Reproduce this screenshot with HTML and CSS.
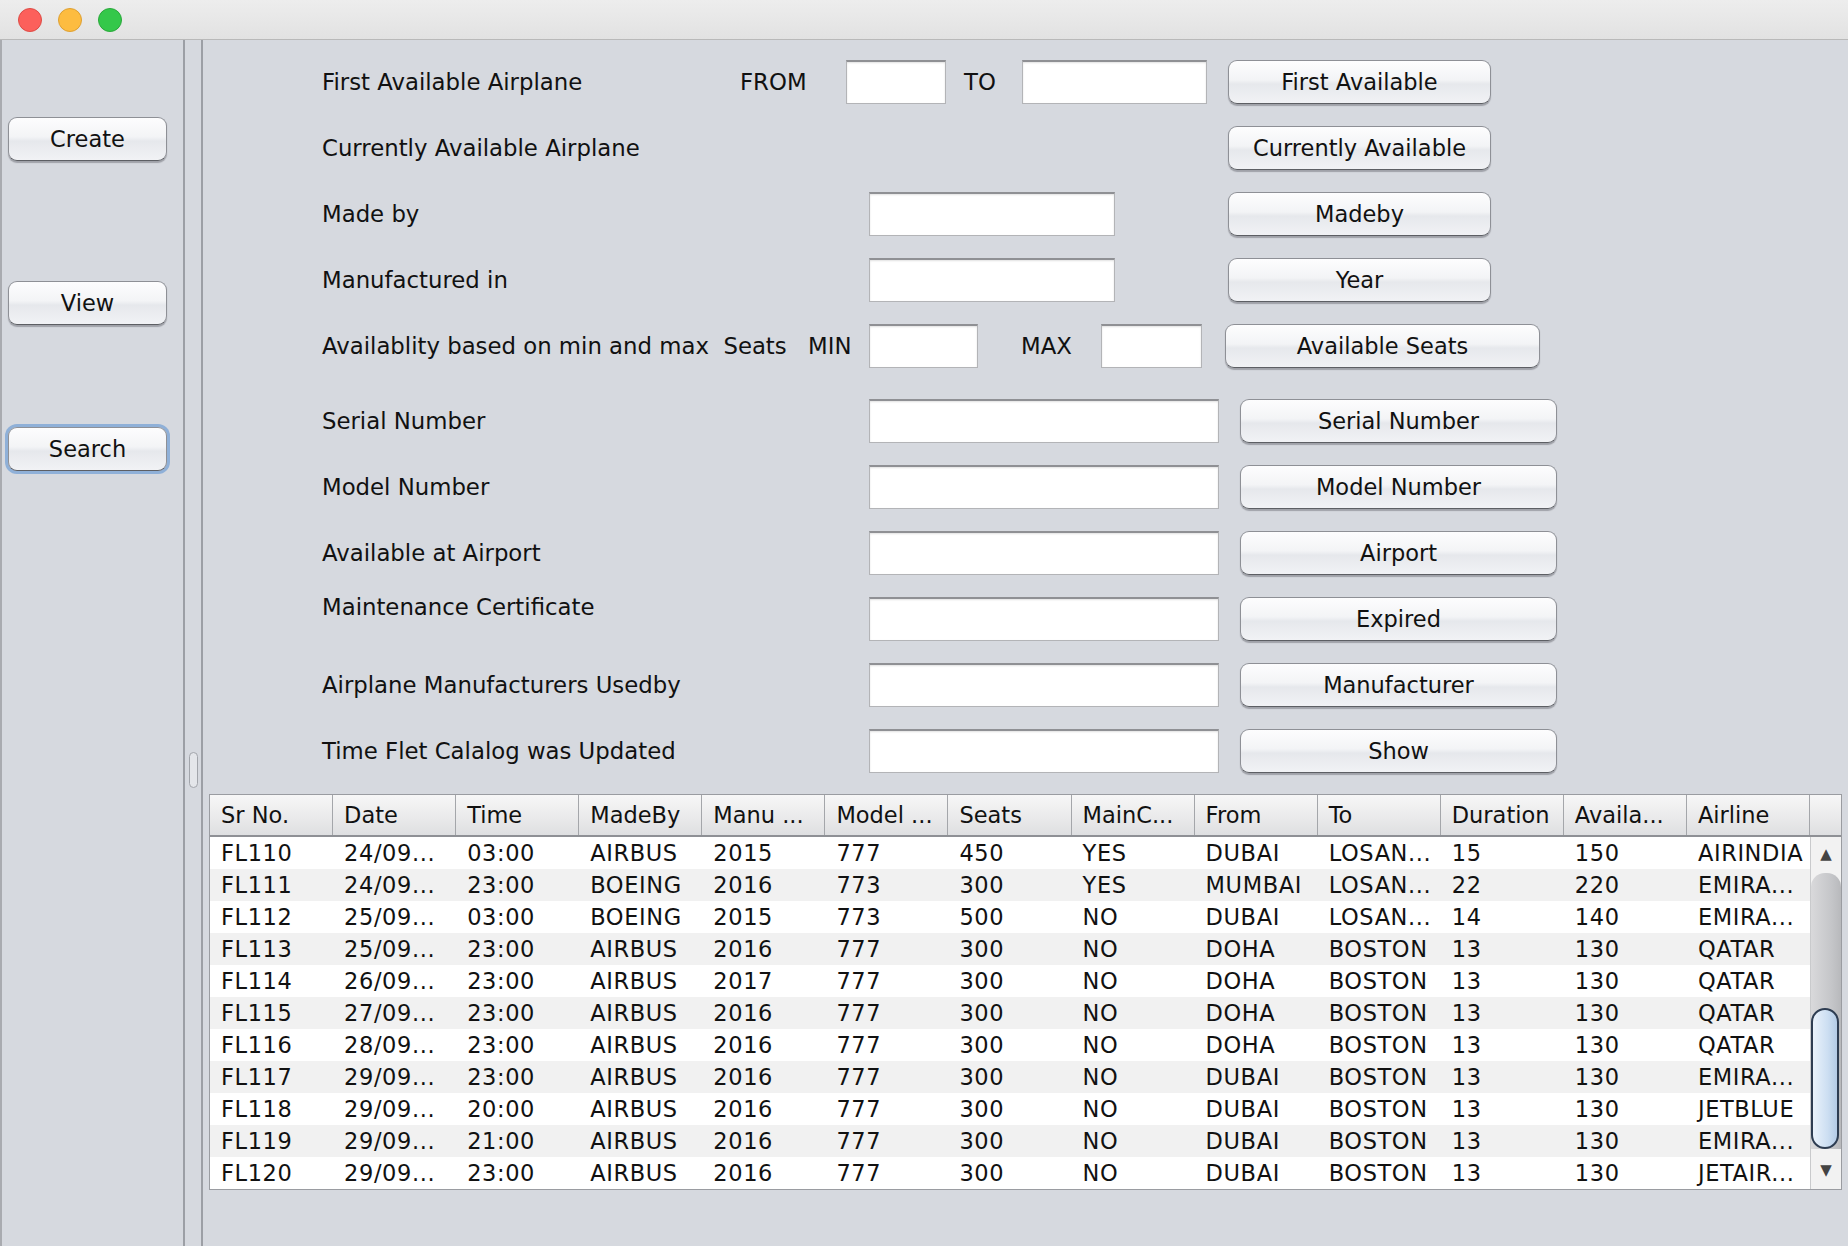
FILE: index.html
```html
<!DOCTYPE html>
<html>
<head>
<meta charset="utf-8">
<title>Airplane Search</title>
<link rel="stylesheet" href="styles.css">
</head>
<body>
<div class="titlebar">
  <span class="light red"></span>
  <span class="light yellow"></span>
  <span class="light green"></span>
</div>
<div class="window">
  <aside class="sidebar">
    <button class="btn side-btn create">Create</button>
    <button class="btn side-btn view">View</button>
    <button class="btn side-btn search focused">Search</button>
  </aside>
  <div class="divider"><span class="handle"></span></div>
  <main class="main">
    <div class="form">
      <div class="row">
        <span class="lbl w418">First Available Airplane</span>
        <span class="lbl w106">FROM</span>
        <input class="tf w100" type="text">
        <span class="lbl w76 pl18">TO</span>
        <input class="tf w185" type="text">
        <button class="btn w263 ml21">First Available</button>
      </div>
      <div class="row">
        <span class="lbl w906">Currently Available Airplane</span>
        <button class="btn w263">Currently Available</button>
      </div>
      <div class="row">
        <span class="lbl w547">Made by</span>
        <input class="tf w246" type="text">
        <button class="btn w263 ml113">Madeby</button>
      </div>
      <div class="row">
        <span class="lbl w547">Manufactured in</span>
        <input class="tf w246" type="text">
        <button class="btn w263 ml113">Year</button>
      </div>
      <div class="row">
        <span class="lbl w486 pre">Availablity based on min and max  Seats</span>
        <span class="lbl w61">MIN</span>
        <input class="tf w109" type="text">
        <span class="lbl w123 pl43">MAX</span>
        <input class="tf w101" type="text">
        <button class="btn w315 ml23">Available Seats</button>
      </div>
      <div class="row gap-lg">
        <span class="lbl w547">Serial Number</span>
        <input class="tf w350" type="text">
        <button class="btn w317 ml21">Serial Number</button>
      </div>
      <div class="row">
        <span class="lbl w547">Model Number</span>
        <input class="tf w350" type="text">
        <button class="btn w317 ml21">Model Number</button>
      </div>
      <div class="row">
        <span class="lbl w547">Available at Airport</span>
        <input class="tf w350" type="text">
        <button class="btn w317 ml21">Airport</button>
      </div>
      <div class="row">
        <span class="lbl w547 raised">Maintenance Certificate</span>
        <input class="tf w350" type="text">
        <button class="btn w317 ml21">Expired</button>
      </div>
      <div class="row">
        <span class="lbl w547">Airplane Manufacturers Usedby</span>
        <input class="tf w350" type="text">
        <button class="btn w317 ml21">Manufacturer</button>
      </div>
      <div class="row">
        <span class="lbl w547">Time Flet Calalog was Updated</span>
        <input class="tf w350" type="text">
        <button class="btn w317 ml21">Show</button>
      </div>
    </div>

    <div class="table">
      <div class="thead">
        <div class="th">Sr No.</div>
        <div class="th">Date</div>
        <div class="th">Time</div>
        <div class="th">MadeBy</div>
        <div class="th">Manu ...</div>
        <div class="th">Model ...</div>
        <div class="th">Seats</div>
        <div class="th">MainC...</div>
        <div class="th">From</div>
        <div class="th">To</div>
        <div class="th">Duration</div>
        <div class="th">Availa...</div>
        <div class="th">Airline</div>
        <div class="th corner"></div>
      </div>
      <div class="tbody-wrap">
        <div class="tbody" id="tbody"></div>
        <div class="scrollbar">
          <div class="sb-up">&#9650;</div>
          <div class="sb-track"><div class="sb-thumb"></div></div>
          <div class="sb-down">&#9660;</div>
        </div>
      </div>
    </div>
  </main>
</div>
<script src="script.js"></script>
</body>
</html>
```

FILE: script.js
```js
var rows = [
  ["FL110","24/09...","03:00","AIRBUS","2015","777","450","YES","DUBAI","LOSAN...","15","150","AIRINDIA"],
  ["FL111","24/09...","23:00","BOEING","2016","773","300","YES","MUMBAI","LOSAN...","22","220","EMIRA..."],
  ["FL112","25/09...","03:00","BOEING","2015","773","500","NO","DUBAI","LOSAN...","14","140","EMIRA..."],
  ["FL113","25/09...","23:00","AIRBUS","2016","777","300","NO","DOHA","BOSTON","13","130","QATAR"],
  ["FL114","26/09...","23:00","AIRBUS","2017","777","300","NO","DOHA","BOSTON","13","130","QATAR"],
  ["FL115","27/09...","23:00","AIRBUS","2016","777","300","NO","DOHA","BOSTON","13","130","QATAR"],
  ["FL116","28/09...","23:00","AIRBUS","2016","777","300","NO","DOHA","BOSTON","13","130","QATAR"],
  ["FL117","29/09...","23:00","AIRBUS","2016","777","300","NO","DUBAI","BOSTON","13","130","EMIRA..."],
  ["FL118","29/09...","20:00","AIRBUS","2016","777","300","NO","DUBAI","BOSTON","13","130","JETBLUE"],
  ["FL119","29/09...","21:00","AIRBUS","2016","777","300","NO","DUBAI","BOSTON","13","130","EMIRA..."],
  ["FL120","29/09...","23:00","AIRBUS","2016","777","300","NO","DUBAI","BOSTON","13","130","JETAIR..."]
];
var tb = document.getElementById("tbody");
rows.forEach(function (r, i) {
  var tr = document.createElement("div");
  tr.className = "tr" + (i % 2 ? " alt" : "");
  r.forEach(function (c) {
    var td = document.createElement("div");
    td.className = "td";
    td.textContent = c;
    tr.appendChild(td);
  });
  tb.appendChild(tr);
});
```

FILE: styles.css
```css
* { box-sizing: border-box; }
html, body { margin: 0; padding: 0; }
body {
  width: 1848px;
  height: 1246px;
  overflow: hidden;
  background: #d6d9df;
  font-family: "DejaVu Sans", "Lucida Grande", sans-serif;
  font-size: 22.5px;
  color: #111;
}

/* title bar */
.titlebar {
  height: 40px;
  background: linear-gradient(#ededed, #e2e2e2);
  border-bottom: 1px solid #b9b9b9;
  display: flex;
  align-items: center;
  padding-left: 18px;
  gap: 16px;
}
.light {
  width: 24px;
  height: 24px;
  border-radius: 50%;
  display: block;
}
.red { background: #fc605b; border: 1px solid #de4b45; }
.yellow { background: #fdbc40; border: 1px solid #dea032; }
.green { background: #34c84a; border: 1px solid #29a83a; }

/* window body */
.window {
  display: flex;
  height: 1206px;
  border-left: 2px solid #a9abb0;
}
.sidebar {
  width: 183px;
  border-right: 2px solid #9c9fa5;
  display: flex;
  flex-direction: column;
  align-items: flex-start;
  padding: 77px 0 0 6px;
}
.divider {
  width: 16px;
  position: relative;
}
.handle {
  position: absolute;
  left: 4px;
  top: 712px;
  width: 9px;
  height: 36px;
  border: 1.5px solid #a2a5ab;
  border-radius: 5px;
  background: #e4e6ea;
}
.main {
  flex: 1;
  border-left: 2px solid #9c9fa5;
  padding: 19px 5px 0 6px;
}

/* buttons */
.btn {
  font-family: inherit;
  font-size: 22.5px;
  color: #111;
  height: 44px;
  padding: 0;
  border: 1.5px solid #8e9096;
  border-bottom-color: #5d5f64;
  border-radius: 9px;
  background: linear-gradient(#fdfdfe 0%, #f3f4f6 45%, #e6e8ec 55%, #f1f2f5 100%);
  box-shadow: 0 1.5px 1px rgba(60, 60, 70, 0.35);
  flex: none;
}
.side-btn { width: 159px; }
.view { margin-top: 120px; }
.search { margin-top: 102px; }
.focused {
  box-shadow: 0 0 0 3px #8fb0d8, 0 1.5px 1px rgba(60, 60, 70, 0.35);
}

/* form */
.form { padding-left: 113px; }
.row {
  display: flex;
  align-items: center;
  height: 45px;
}
.row + .row { margin-top: 21px; }
.row.gap-lg { margin-top: 30px; }
.lbl { flex: none; white-space: nowrap; font-size: 22.8px; }
.pre { white-space: pre; }
.raised { align-self: flex-start; line-height: 22px; }
.tf {
  flex: none;
  height: 44px;
  background: #fff;
  border: 1px solid #b3b4b7;
  border-top: 2px solid #8f9094;
  box-shadow: inset 0 1px 2px rgba(0, 0, 0, 0.12);
  outline: none;
  margin: 0;
}
.w61 { width: 61px; }
.w76 { width: 76px; }
.w100 { width: 100px; }
.w101 { width: 101px; }
.w106 { width: 106px; }
.w109 { width: 109px; }
.w123 { width: 123px; }
.w185 { width: 185px; }
.w246 { width: 246px; }
.w263 { width: 263px; }
.w315 { width: 315px; }
.w317 { width: 317px; }
.w350 { width: 350px; }
.w418 { width: 418px; }
.w486 { width: 486px; }
.w547 { width: 547px; }
.w906 { width: 906px; }
.pl18 { padding-left: 18px; }
.pl43 { padding-left: 43px; }
.ml21 { margin-left: 21px; }
.ml23 { margin-left: 23px; }
.ml113 { margin-left: 113px; }

/* table */
.table {
  margin-top: 21px;
  width: 1633px;
  border: 1px solid #9a9ca1;
  background: #fff;
}
.thead {
  display: grid;
  grid-template-columns: repeat(13, 1fr) 31px;
  height: 42px;
  background: linear-gradient(#f7f7f7, #e9e9ea 60%, #dedfe1);
  border-bottom: 2px solid #8e9095;
}
.th {
  border-right: 1.5px solid #a4a6aa;
  padding-left: 11px;
  line-height: 40px;
  white-space: nowrap;
  overflow: hidden;
}
.th.corner { border-right: none; }
.tbody-wrap {
  display: flex;
}
.tbody { width: 1600px; }
.tr {
  display: grid;
  grid-template-columns: repeat(13, 1fr);
  height: 32px;
  background: #fff;
}
.tr.alt { background: #f1f1f1; }
.td {
  padding-left: 11px;
  line-height: 32px;
  white-space: nowrap;
  overflow: hidden;
  letter-spacing: 0.6px;
}

/* scrollbar */
.scrollbar {
  flex: 1;
  display: flex;
  flex-direction: column;
  background: #f2f2f2;
  border-left: 1px solid #c9cacc;
}
.sb-up, .sb-down {
  height: 36px;
  font-size: 15px;
  color: #444;
  text-align: center;
  line-height: 34px;
  flex: none;
}
.sb-down { height: 40px; line-height: 42px; }
.sb-track {
  flex: 1;
  position: relative;
  border-radius: 14px 14px 0 0;
  background: linear-gradient(to right, #d9d9db, #c4c5c8 70%, #b8b9bc);
}
.sb-thumb {
  position: absolute;
  left: 0;
  right: 2px;
  bottom: 0;
  height: 141px;
  border: 2px solid #2e3d52;
  border-radius: 14px;
  background: linear-gradient(to right, #eaf2fb, #cddff2 60%, #b4cbe6);
}
```
